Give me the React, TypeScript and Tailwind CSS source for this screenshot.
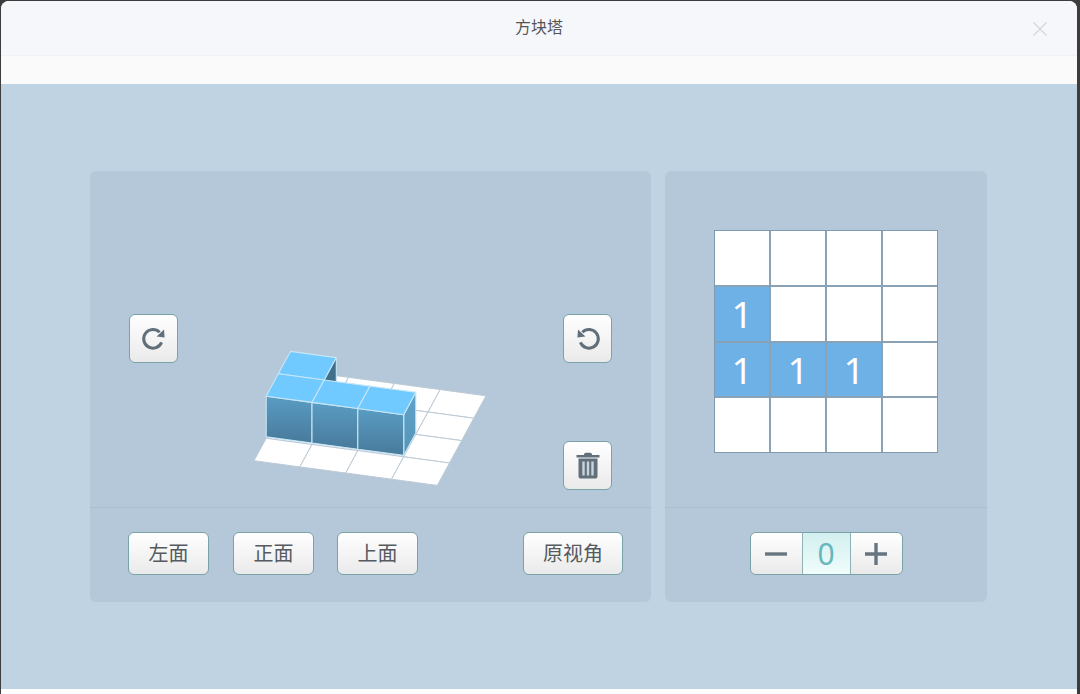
import React from "react";

const P = (c: number, r: number, h: number, dy = 0) => {
  const x = 254 + 45.83 * c + 12.17 * r;
  const y = 460.7 + 6.17 * c - 22.4 * r - 40.7 * h + dy;
  return `${x.toFixed(1)},${y.toFixed(1)}`;
};
const poly = (pts: [number, number, number][], dy = 0) => pts.map((p) => P(p[0], p[1], p[2], dy)).join(" ");

function Cube({ c, r }: { c: number; r: number }) {
  const d = -1.4;
  return (
    <g stroke="#c8e6f4" strokeWidth="1.1" strokeLinejoin="round">
      <polygon points={poly([[c + 1, r, 0], [c + 1, r + 1, 0], [c + 1, r + 1, 1], [c + 1, r, 1]], d)} fill={r === 2 ? "#3f6f8b" : "url(#side)"} />
      <polygon points={poly([[c, r, 0], [c + 1, r, 0], [c + 1, r, 1], [c, r, 1]], d)} fill="url(#front)" />
      <polygon points={poly([[c, r, 1], [c + 1, r, 1], [c + 1, r + 1, 1], [c, r + 1, 1]], d)} fill="#70c9ff" />
    </g>
  );
}

function Scene() {
  const cells: [number, number][] = [];
  for (let r = 3; r >= 0; r--) for (let c = 0; c < 4; c++) cells.push([c, r]);
  return (
    <svg viewBox="178 171 385 336" className="w-[385px] h-[336px]">
      <defs>
        <linearGradient id="front" x1="0" y1="0" x2="0" y2="1">
          <stop offset="0" stopColor="#5a9cc3" />
          <stop offset="1" stopColor="#487a9b" />
        </linearGradient>
        <linearGradient id="side" x1="0" y1="0" x2="0" y2="1">
          <stop offset="0" stopColor="#5fa3cb" />
          <stop offset="1" stopColor="#5594b8" />
        </linearGradient>
      </defs>
      {cells.map(([c, r]) => (
        <polygon
          key={`${c}-${r}`}
          points={poly([[c, r, 0], [c + 1, r, 0], [c + 1, r + 1, 0], [c, r + 1, 0]])}
          fill="#ffffff"
          stroke="#bccad6"
          strokeWidth="1"
        />
      ))}
      <Cube c={0} r={2} />
      <Cube c={0} r={1} />
      <Cube c={1} r={1} />
      <Cube c={2} r={1} />
    </svg>
  );
}

const btn =
  "flex items-center justify-center rounded-[6px] border border-[#7aa3a8] bg-gradient-to-b from-white to-[#eaeaea] text-[20px] leading-none text-[#555b60]";

function RotateIcon({ flip }: { flip?: boolean }) {
  return (
    <svg viewBox="0 0 26 26" className={flip ? "w-[26px] h-[26px] -scale-x-100" : "w-[26px] h-[26px]"}>
      <path d="M20.6 16.4A9.3 9.3 0 1 1 18.6 6.3" fill="none" stroke="#616f7b" strokeWidth="3" />
      <polygon points="23,3.4 23.6,11.6 15.6,10.4" fill="#616f7b" />
    </svg>
  );
}

function TrashIcon() {
  return (
    <svg viewBox="0 0 24 27" className="w-[24px] h-[27px]">
      <path d="M8 2.5Q8 .8 10 .8h4q2 0 2 1.7V3h7.5v2.4H.5V3H8z" fill="#616f7b" />
      <path d="M2.5 6.5h19V24q0 2.6-2.6 2.6H5.1Q2.5 26.6 2.5 24z" fill="#616f7b" />
      <rect x="6.3" y="9.5" width="2.4" height="14" fill="#c9d3da" />
      <rect x="10.8" y="9.5" width="2.4" height="14" fill="#c9d3da" />
      <rect x="15.3" y="9.5" width="2.4" height="14" fill="#c9d3da" />
    </svg>
  );
}

const filled = new Set([4, 8, 9, 10]);

export default function App() {
  return (
    <div
      className="w-[1080px] h-[694px] bg-[#3c3c3c] pt-px pl-px pr-[3px] overflow-hidden"
      style={{ fontFamily: '"Liberation Sans", "Noto Sans CJK SC", sans-serif' }}
    >
      <div className="flex h-[693px] flex-col overflow-hidden rounded-t-[8px] bg-[#fcfcfc]">
        <header className="relative flex h-[55px] shrink-0 items-center justify-center border-b border-[#f0f0f5] bg-[#f5f7fb] text-[16px] text-[#555555]">
          方块塔
          <svg viewBox="0 0 16 16" className="absolute right-[29px] top-[20px] h-[16px] w-[16px]">
            <path d="M1.5 1.5L14.5 14.5M14.5 1.5L1.5 14.5" stroke="#d6d7db" strokeWidth="1.3" fill="none" />
          </svg>
        </header>
        <div className="h-[28px] shrink-0 bg-[#fafafa]" />
        <main className="flex h-[605px] shrink-0 gap-[14px] bg-[#c0d3e2] pl-[89px] pt-[87px]">
          <section className="flex h-[431px] w-[561px] flex-col rounded-[6px] bg-[#b4c8d9]">
            <div className="flex h-[337px] shrink-0 border-b border-[#a8bdcf] px-[39px] pt-[143px]">
              <button className={`${btn} h-[49px] w-[49px] shrink-0`}>
                <RotateIcon />
              </button>
              <div className="-mt-[143px] w-[385px] shrink-0">
                <Scene />
              </div>
              <div className="flex shrink-0 flex-col gap-[78px]">
                <button className={`${btn} h-[49px] w-[49px]`}>
                  <RotateIcon flip />
                </button>
                <button className={`${btn} h-[49px] w-[49px]`}>
                  <TrashIcon />
                </button>
              </div>
            </div>
            <div className="flex flex-1 items-center pb-[3px] pl-[38px] pr-[28px]">
              <button className={`${btn} h-[43px] w-[81px]`}>左面</button>
              <button className={`${btn} ml-[24px] h-[43px] w-[81px]`}>正面</button>
              <button className={`${btn} ml-[23px] h-[43px] w-[81px]`}>上面</button>
              <button className={`${btn} ml-auto h-[43px] w-[100px]`}>原视角</button>
            </div>
          </section>
          <section className="flex h-[431px] w-[322px] flex-col rounded-[6px] bg-[#b4c8d9]">
            <div className="flex h-[337px] shrink-0 justify-center border-b border-[#a8bdcf] pt-[59px]">
              <div className="grid h-[223px] w-[224px] grid-cols-4 grid-rows-4 gap-[2px] border border-[#7f99ae] bg-[#8aa2b6]">
                {Array.from({ length: 16 }, (_, i) => (
                  <div
                    key={i}
                    className={
                      filled.has(i)
                        ? "flex items-center justify-center bg-[#6eb1e7] text-[37px] font-normal text-white"
                        : "bg-white"
                    }
                    style={filled.has(i) ? { fontFamily: '"Noto Sans", sans-serif' } : undefined}
                  >
                    {filled.has(i) ? "1" : null}
                  </div>
                ))}
              </div>
            </div>
            <div className="flex flex-1 items-center justify-center pb-[3px]">
              <div className="flex h-[43px] w-[153px] overflow-hidden rounded-[6px] border border-[#7aa3a8]">
                <button className="flex w-[51px] items-center justify-center bg-gradient-to-b from-white to-[#eaeaea]">
                  <svg viewBox="0 0 22 4" className="h-[4px] w-[22px]">
                    <rect width="22" height="3.4" y="0.3" fill="#66757f" />
                  </svg>
                </button>
                <div
                  className="flex w-[49px] items-center justify-center border-x border-[#8fb2b4] bg-gradient-to-b from-[#d3efef] to-[#f0fdfc] text-[30px] font-normal text-[#67b8bd]"
                  style={{ fontFamily: '"Noto Sans", sans-serif' }}
                >
                  0
                </div>
                <button className="flex flex-1 items-center justify-center bg-gradient-to-b from-white to-[#eaeaea]">
                  <svg viewBox="0 0 22 22" className="h-[22px] w-[22px]">
                    <path d="M0 9.3h9.3V0h3.4v9.3H22v3.4h-9.3V22H9.3v-9.3H0z" fill="#66757f" />
                  </svg>
                </button>
              </div>
            </div>
          </section>
        </main>
      </div>
    </div>
  );
}
